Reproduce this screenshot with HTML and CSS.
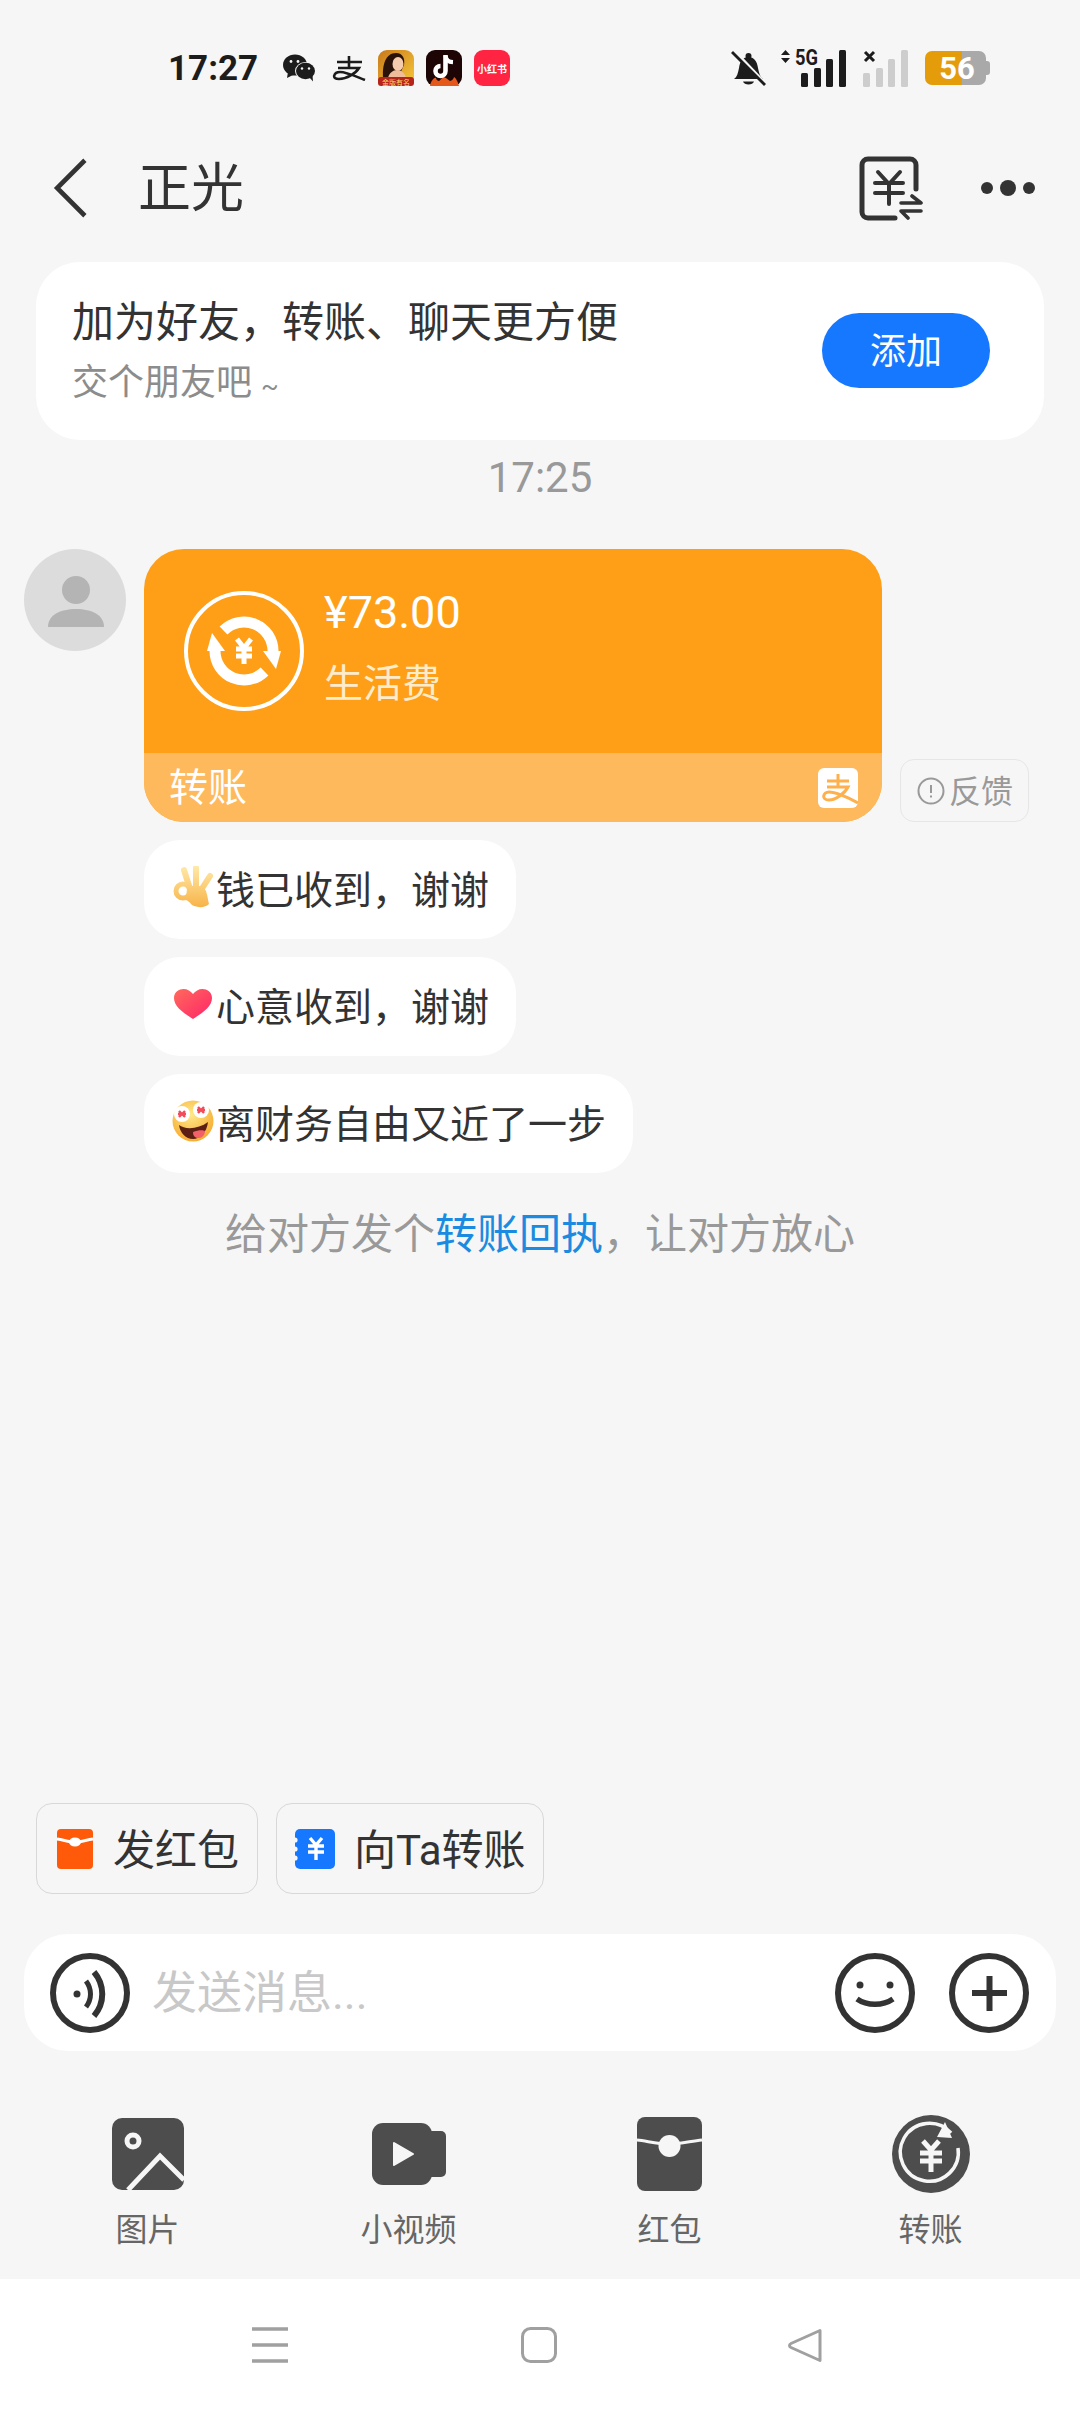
FILE: index.html
```html
<!DOCTYPE html>
<html lang="zh-CN">
<head>
  <meta charset="UTF-8" />
  <meta name="viewport" content="width=device-width, initial-scale=1.0"/>
  <title>正光</title>
  <link rel="stylesheet" href="styles.css">
</head>
<body>
  <div class="page">

    <!-- status bar -->
    <div class="status">
      <span class="clock">17:27</span>
      <div class="notif">
        <svg class="ic-wechat" viewBox="0 0 33 28">
          <ellipse cx="12" cy="11" rx="12" ry="10.5" fill="#1c1c1c"/>
          <path d="M5 18l-1 6 6-3z" fill="#1c1c1c"/>
          <ellipse cx="22.5" cy="17" rx="10.5" ry="9" fill="#f6f6f6"/>
          <ellipse cx="22.5" cy="17" rx="9.5" ry="8.3" fill="#1c1c1c"/>
          <path d="M26 23l4 4.500-.5-6z" fill="#1c1c1c"/>
          <circle cx="8" cy="7.500" r="1.400" fill="#f6f6f6"/>
          <circle cx="15" cy="7.500" r="1.400" fill="#f6f6f6"/>
          <circle cx="19" cy="14.500" r="1.200" fill="#f6f6f6"/>
          <circle cx="26" cy="14.500" r="1.200" fill="#f6f6f6"/>
        </svg>
        <svg class="ic-zhi" viewBox="0 0 34 26">
          <path d="M5 7h25M17 1v12M6 13h21C24 18 15 24 7 24c-8 0-5-7 1-7 7 0 17 5 25 8" fill="none" stroke="#1c1c1c" stroke-width="2.600"/>
        </svg>
        <svg class="ic-app" viewBox="0 0 36 36">
          <defs>
            <linearGradient id="gold" x1="0" y1="0" x2="1" y2="1">
              <stop offset="0" stop-color="#c9791a"/>
              <stop offset="1" stop-color="#f7c93a"/>
            </linearGradient>
          </defs>
          <rect width="36" height="36" rx="9" fill="url(#gold)"/>
          <path d="M5 28C4 14 8 3 18 3c7 0 9 6 8 12l-6 13z" fill="#2b1208"/>
          <ellipse cx="20" cy="14" rx="5.500" ry="7" fill="#f5cbae"/>
          <path d="M10 28c1-5 5-8 9-8s8 3 9 8z" fill="#f0bd9c"/>
          <rect y="27" width="36" height="9" rx="3" fill="#b5231a"/>
          <text class="ic-app-txt" x="18" y="34.500" text-anchor="middle">金版有名</text>
        </svg>
        <svg class="ic-app" viewBox="0 0 36 36">
          <rect width="36" height="36" rx="9" fill="#1d0505"/>
          <path d="M4 36c1-5 4-9 6-8 0 2 2 3 3 3 2-1 2-3 5-4 3 1 4 3 6 4 2 0 4-3 4-4 2 1 4 5 5 9z" fill="#e4581c"/>
          <path d="M19.500 5v16a5 5 0 1 1-5-5" fill="none" stroke="#fff" stroke-width="4.600"/>
          <path d="M19.500 6c.5 4 3.500 6 7.500 6.200" fill="none" stroke="#fff" stroke-width="4.200"/>
        </svg>
        <div class="ic-red">小红书</div>
      </div>
      <div class="sys">
        <svg class="ic-bell" viewBox="0 0 35 35">
          <path d="M3 28c3-2 4-6 5-11 1-7 4-11 9.500-11S26 10 27 17c1 5 2 9 5 11z" fill="#1c1c1c"/>
          <circle cx="17.500" cy="5" r="3" fill="#1c1c1c"/>
          <path d="M12 30.500h11c-1 4-10 4-11 0z" fill="#1c1c1c"/>
          <path d="M3 0l31 33" stroke="#f6f6f6" stroke-width="4"/>
          <path d="M1 1l33 33" stroke="#1c1c1c" stroke-width="2.800"/>
        </svg>
        <svg class="ic-signal" viewBox="0 -8 68 46">
          <path d="M1 6l4.500-5L10 6zM1 9h9l-4.500 5z" fill="#1c1c1c"/>
          <text class="sig-txt" x="15" y="16" textLength="23" lengthAdjust="spacingAndGlyphs">5G</text>
          <rect x="21" y="24" width="7" height="14" rx="1.500" fill="#1c1c1c"/>
          <rect x="34" y="19" width="7" height="19" rx="1.500" fill="#1c1c1c"/>
          <rect x="46" y="10" width="7" height="28" rx="1.500" fill="#1c1c1c"/>
          <rect x="59" y="1" width="7" height="37" rx="1.500" fill="#1c1c1c"/>
        </svg>
        <svg class="ic-signal2" viewBox="0 0 46 38">
          <path d="M2 3l9 9M11 3l-9 9" stroke="#1c1c1c" stroke-width="3"/>
          <rect x="0" y="24" width="7" height="14" rx="1.500" fill="#cdcdcd"/>
          <rect x="13" y="19" width="7" height="19" rx="1.500" fill="#cdcdcd"/>
          <rect x="25" y="10" width="7" height="28" rx="1.500" fill="#cdcdcd"/>
          <rect x="38" y="1" width="7" height="37" rx="1.500" fill="#cdcdcd"/>
        </svg>
        <div class="battery">
          <div class="battery-body"><span class="battery-num">56</span></div>
          <div class="battery-tip"></div>
        </div>
      </div>
    </div>

    <!-- header -->
    <div class="nav">
      <svg class="ic-back" viewBox="0 0 36 60">
        <path d="M32 3L5 30l27 27" fill="none" stroke="#333" stroke-width="4.500"/>
      </svg>
      <div class="nav-title">正光</div>
      <svg class="ic-bill" viewBox="0 0 64 65">
        <path d="M57 33V9a6 6 0 0 0-6-6H9a6 6 0 0 0-6 6v47a6 6 0 0 0 6 6h27" fill="none" stroke="#333" stroke-width="5" stroke-linecap="round"/>
        <path d="M19 16l11 12 11-12M16 27h28M16 37h28M30 27v21" fill="none" stroke="#333" stroke-width="4" stroke-linecap="round"/>
        <path d="M53 40l9 7H42M62 55H42l7 7" fill="none" stroke="#333" stroke-width="3.600" stroke-linecap="round" stroke-linejoin="round"/>
      </svg>
      <div class="dots"><i></i><i class="big"></i><i></i></div>
    </div>

    <!-- add friend -->
    <div class="add-card">
      <div class="add-text">
        <div class="add-title">加为好友，转账、聊天更方便</div>
        <div class="add-sub">交个朋友吧 <span class="tilde">~</span></div>
      </div>
      <div class="add-btn">添加</div>
    </div>

    <div class="time">17:25</div>

    <!-- message -->
    <div class="msg">
      <div class="avatar">
        <svg viewBox="0 0 102 102">
          <circle cx="52" cy="41" r="14" fill="#b4b4b4"/>
          <path d="M24 78c0-12 12-18 28-18s28 6 28 18z" fill="#b4b4b4"/>
        </svg>
      </div>
      <div class="msg-col">
        <div class="transfer-row">
          <div class="transfer">
            <div class="transfer-top">
              <svg class="ic-trans" viewBox="0 0 120 120">
                <circle cx="60" cy="60" r="58" fill="none" stroke="#fff" stroke-width="4"/>
                <path d="M39.500 39.500A29 29 0 0 1 89 60" fill="none" stroke="#fff" stroke-width="11"/>
                <path d="M79 60h18l-5 18z" fill="#fff"/>
                <g transform="rotate(180 60 60)">
                  <path d="M39.500 39.500A29 29 0 0 1 89 60" fill="none" stroke="#fff" stroke-width="11"/>
                  <path d="M79 60h18l-5 18z" fill="#fff"/>
                </g>
                <path d="M53 48l7 9 7-9M52 58h16M52 65h16M60 57v16" fill="none" stroke="#fff" stroke-width="5"/>
              </svg>
              <div class="transfer-text">
                <div class="amount">¥73.00</div>
                <div class="memo">生活费</div>
              </div>
            </div>
            <div class="transfer-foot">
              <span class="foot-label">转账</span>
              <svg class="ic-ali" viewBox="0 0 40 40">
                <rect width="40" height="40" rx="6" fill="#fff"/>
                <path d="M9 13h22M20 6v13M9 19h21C27 25 18 32 11 32 3 32 5 24 11 24c8 0 18 5 29 11" fill="none" stroke="#fdb04b" stroke-width="3"/>
              </svg>
            </div>
          </div>
          <div class="feedback">
            <svg class="ic-warn" viewBox="0 0 28 28">
              <circle cx="14" cy="14" r="12.500" fill="none" stroke="#999" stroke-width="2"/>
              <path d="M14 8v8M14 18.500v2" stroke="#999" stroke-width="2"/>
            </svg>
            <span class="feedback-label">反馈</span>
          </div>
        </div>

        <div class="bubble">
          <svg class="emoji" viewBox="0 0 42 42">
            <defs>
              <linearGradient id="skin" x1="0" y1="0" x2="0" y2="42" gradientUnits="userSpaceOnUse">
                <stop offset="0" stop-color="#ffe9a8"/>
                <stop offset="1" stop-color="#f8b247"/>
              </linearGradient>
              <linearGradient id="heart" x1="0" y1="0" x2="1" y2="1">
                <stop offset="0" stop-color="#ff6a5c"/>
                <stop offset="1" stop-color="#ff2469"/>
              </linearGradient>
              <radialGradient id="face" cx=".45" cy=".35" r=".7">
                <stop offset="0" stop-color="#ffe98a"/>
                <stop offset="1" stop-color="#f6a92c"/>
              </radialGradient>
            </defs>
            <path d="M18 23L12 4M24 22L24 2M29 24L38 10" fill="none" stroke="url(#skin)" stroke-width="6" stroke-linecap="round"/>
            <circle cx="11" cy="25" r="7" fill="none" stroke="url(#skin)" stroke-width="5"/>
            <path d="M15 22c6-4 16-3 19 3 2 6 2 10 3 13-4 4-11 4-17 1-2-2-3-4-6-5z" fill="url(#skin)"/>
          </svg>
          <span>钱已收到，谢谢</span>
        </div>
        <div class="bubble">
          <svg class="emoji" viewBox="0 0 42 42">
            <path d="M21 36C10 29 2 23 2 15 2 9 7 6 11.500 6c4 0 7 2 9.500 5 2.500-3 5.500-5 9.500-5C35 6 40 9 40 15c0 8-8 14-19 21z" fill="url(#heart)"/>
          </svg>
          <span>心意收到，谢谢</span>
        </div>
        <div class="bubble">
          <svg class="emoji" viewBox="0 0 42 42">
            <circle cx="21" cy="21" r="20.500" fill="url(#face)"/>
            <circle cx="10" cy="14" r="8" fill="#fff"/>
            <circle cx="29" cy="10" r="8" fill="#fff"/>
            <path d="M7 11l6 6M13 11l-6 6M6 14h8" stroke="#f44b5a" stroke-width="2.400"/>
            <path d="M26 7l6 6M32 7l-6 6M25 10h8" stroke="#f44b5a" stroke-width="2.400"/>
            <path d="M7 25c6 5 20 4 29-3-1 10-8 17-15 17S8 33 7 25z" fill="#5b1f14"/>
            <path d="M21 32c5-2 10-2 12-1 0 4-3 7-6 7-4 0-6-2-6-6z" fill="#f2606a"/>
          </svg>
          <span>离财务自由又近了一步</span>
        </div>
      </div>
    </div>

    <div class="hint">给对方发个<span class="hint-link">转账回执</span>，让对方放心</div>

    <div class="spacer"></div>

    <!-- quick actions -->
    <div class="chips">
      <div class="chip">
        <svg class="ic-chip-red" viewBox="0 0 36 40">
          <rect width="36" height="40" rx="4" fill="#ff5a0a"/>
          <path d="M0 10c7 1 12 3 18 3s11-2 18-3" fill="none" stroke="#fff" stroke-width="3"/>
          <ellipse cx="18" cy="13" rx="6" ry="4.500" fill="#fff"/>
        </svg>
        <span class="chip-label">发红包</span>
      </div>
      <div class="chip chip-blue">
        <svg class="ic-chip-blue" viewBox="0 0 42 40">
          <rect x="2" width="40" height="40" rx="5" fill="#1677ff"/>
          <circle cx="2" cy="11" r="2.600" fill="#f6f6f6"/>
          <circle cx="2" cy="20" r="2.600" fill="#f6f6f6"/>
          <circle cx="2" cy="29" r="2.600" fill="#f6f6f6"/>
          <path d="M17 9l6 7 6-7M15 17h16M15 23h16M23 16v15" fill="none" stroke="#fff" stroke-width="3.400"/>
        </svg>
        <span class="chip-label">向Ta转账</span>
      </div>
    </div>

    <!-- input -->
    <div class="input-bar">
      <svg class="ic-round" viewBox="0 0 80 80">
        <circle cx="40" cy="40" r="37" fill="none" stroke="#333" stroke-width="6"/>
        <circle cx="27" cy="41" r="3.500" fill="#333"/>
        <path d="M36 28c6 8 6 18 0 26" fill="none" stroke="#333" stroke-width="5"/>
        <path d="M44 19c11 13 11 31 0 44" fill="none" stroke="#333" stroke-width="6"/>
      </svg>
      <div class="input-ph">发送消息...</div>
      <svg class="ic-round" viewBox="0 0 80 80">
        <circle cx="40" cy="40" r="37" fill="none" stroke="#333" stroke-width="6"/>
        <circle cx="25" cy="32" r="3.500" fill="#333"/>
        <circle cx="55" cy="32" r="3.500" fill="#333"/>
        <path d="M22 46c10 7 26 7 36 0" fill="none" stroke="#333" stroke-width="5.500"/>
      </svg>
      <svg class="ic-round ic-plus" viewBox="0 0 80 80">
        <circle cx="40" cy="40" r="37" fill="none" stroke="#333" stroke-width="6"/>
        <path d="M23 40h35M40.500 23v35" stroke="#333" stroke-width="6"/>
      </svg>
    </div>

    <!-- tray -->
    <div class="tray">
      <div class="tray-item">
        <div class="tray-icon">
          <svg width="72" height="72" viewBox="0 0 72 72">
            <rect width="72" height="72" rx="10" fill="#4d4d4d"/>
            <circle cx="21" cy="23" r="6" fill="#4d4d4d" stroke="#f6f6f6" stroke-width="5"/>
            <path d="M16 72l32-34 24 24" fill="none" stroke="#f6f6f6" stroke-width="5"/>
          </svg>
        </div>
        <div class="tray-label">图片</div>
      </div>
      <div class="tray-item">
        <div class="tray-icon">
          <svg width="74" height="62" viewBox="0 0 74 62">
            <rect width="60" height="62" rx="11" fill="#4d4d4d"/>
            <rect x="50" y="8" width="24" height="46" rx="5" fill="#4d4d4d"/>
            <path d="M22 20l19 11-19 11z" fill="#f6f6f6" stroke="#f6f6f6" stroke-width="2" stroke-linejoin="round"/>
          </svg>
        </div>
        <div class="tray-label">小视频</div>
      </div>
      <div class="tray-item">
        <div class="tray-icon">
          <svg width="65" height="74" viewBox="0 0 65 74">
            <rect width="65" height="74" rx="8" fill="#4d4d4d"/>
            <path d="M0 23c10 1 20 4 32 4s22-3 33-4" fill="none" stroke="#f6f6f6" stroke-width="3"/>
            <circle cx="32.500" cy="29" r="11" fill="#f6f6f6"/>
          </svg>
        </div>
        <div class="tray-label">红包</div>
      </div>
      <div class="tray-item">
        <div class="tray-icon">
          <svg width="78" height="78" viewBox="0 0 78 78">
            <circle cx="39" cy="39" r="39" fill="#4d4d4d"/>
            <path d="M59 18A29 29 0 1 0 66 33" fill="none" stroke="#f6f6f6" stroke-width="3.500"/>
            <path d="M53 7l7 16-15-1z" fill="#f6f6f6"/>
            <path d="M31 26l8 9 8-9M28 38h22M28 46h22M39 35v22" fill="none" stroke="#f6f6f6" stroke-width="5"/>
          </svg>
        </div>
        <div class="tray-label">转账</div>
      </div>
    </div>

    <!-- system nav -->
    <div class="sysnav">
      <svg width="36" height="38" viewBox="0 0 36 38">
        <path d="M0 3h36M0 19h36M0 35h36" stroke="#a0a0a0" stroke-width="3.400"/>
      </svg>
      <svg width="36" height="36" viewBox="0 0 36 36">
        <rect x="1.500" y="1.500" width="33" height="33" rx="8" fill="none" stroke="#a0a0a0" stroke-width="3"/>
      </svg>
      <svg width="36" height="36" viewBox="0 0 36 36">
        <path d="M32 3.500L3 16.500c-2 1-2 3 0 4l29 13V3.500z" fill="none" stroke="#a0a0a0" stroke-width="3" stroke-linejoin="round"/>
      </svg>
    </div>
  </div>
</body>
</html>
```

FILE: styles.css
```css
* {
  box-sizing: border-box;
}

body {
  margin: 0;
  background: #f6f6f6;
  font-family: "Roboto", "Noto Sans CJK SC", sans-serif;
  color: #333;
}

svg {
  display: block;
  flex: none;
}

.page {
  width: 1080px;
  height: 2412px;
  display: flex;
  flex-direction: column;
  overflow: hidden;
}

/* status bar */
.status {
  height: 136px;
  flex: none;
  display: flex;
  align-items: center;
  padding-left: 168px;
  color: #1c1c1c;
}

.clock {
  font-family: "Roboto", sans-serif;
  font-size: 35px;
  font-weight: 700;
  width: 115px;
}

.notif {
  display: flex;
  align-items: center;
  gap: 12px;
}

.ic-wechat {
  width: 33px;
  height: 28px;
  margin-right: 4px;
}

.ic-zhi {
  width: 34px;
  height: 26px;
}

.ic-app {
  width: 36px;
  height: 36px;
}

.ic-app-txt {
  font-size: 7px;
  fill: #ffd76a;
  font-family: "Noto Sans CJK SC", sans-serif;
}

.ic-red {
  width: 36px;
  height: 36px;
  border-radius: 9px;
  background: #ff2442;
  color: #fff;
  font-size: 10px;
  font-weight: 700;
  font-family: "Noto Sans CJK SC", sans-serif;
  display: flex;
  align-items: center;
  justify-content: center;
}

.sys {
  margin-left: auto;
  margin-right: 90px;
  display: flex;
  align-items: center;
}

.ic-bell {
  width: 35px;
  height: 35px;
  margin-right: 14px;
}

.ic-signal {
  width: 68px;
  height: 46px;
  margin-top: -8px;
  margin-right: 15px;
}

.sig-txt {
  font-family: "Roboto", sans-serif;
  font-size: 22px;
  font-weight: 700;
  fill: #1c1c1c;
}

.ic-signal2 {
  width: 46px;
  height: 38px;
  margin-right: 16px;
}

.battery {
  display: flex;
  align-items: center;
}

.battery-body {
  width: 61px;
  height: 34px;
  padding-left: 3px;
  border-radius: 7px;
  background: linear-gradient(90deg, #e59c0b 0, #e59c0b 37px, #a9a9a9 37px);
  display: flex;
  align-items: center;
  justify-content: center;
}

.battery-num {
  color: #fff;
  font-family: "Roboto", sans-serif;
  font-weight: 700;
  font-size: 31px;
}

.battery-tip {
  width: 4px;
  height: 14px;
  background: #a9a9a9;
  border-radius: 0 3px 3px 0;
}

/* header */
.nav {
  height: 104px;
  flex: none;
  display: flex;
  align-items: center;
  padding-left: 52px;
}

.ic-back {
  width: 37px;
  height: 62px;
  margin-right: 49px;
}

.nav-title {
  font-size: 53px;
  color: #333;
  padding-bottom: 8px;
}

.ic-bill {
  width: 64px;
  height: 65px;
  margin-left: auto;
  margin-right: 58px;
}

.dots {
  display: flex;
  align-items: center;
  gap: 7px;
  margin-right: 45px;
}

.dots i {
  display: block;
  width: 12px;
  height: 12px;
  border-radius: 50%;
  background: #333;
}

.dots i.big {
  width: 16px;
  height: 16px;
}

/* add friend card */
.add-card {
  flex: none;
  height: 178px;
  margin: 22px 36px 0;
  padding: 0 54px 0 36px;
  background: #fff;
  border-radius: 44px;
  display: flex;
  align-items: center;
  justify-content: space-between;
}

.add-text {
  padding-top: 2px;
}

.add-title {
  font-size: 42px;
  line-height: 60px;
  color: #333;
}

.add-sub {
  font-size: 36px;
  line-height: 52px;
  margin-top: 4px;
  color: #8c8c8c;
}

.tilde {
  font-size: 26px;
}

.add-btn {
  width: 168px;
  height: 75px;
  margin-bottom: 2px;
  padding-bottom: 4px;
  border-radius: 38px;
  background: #1677ff;
  color: #fff;
  font-size: 36px;
  display: flex;
  align-items: center;
  justify-content: center;
}

.time {
  flex: none;
  height: 72px;
  padding-top: 3px;
  line-height: 69px;
  text-align: center;
  font-size: 42px;
  color: #999;
}

/* message */
.msg {
  flex: none;
  display: flex;
  margin-top: 37px;
  padding-left: 24px;
  gap: 18px;
}

.avatar {
  width: 102px;
  height: 102px;
  border-radius: 50%;
  background: #dcdcdc;
  flex: none;
}

.msg-col {
  display: flex;
  flex-direction: column;
  align-items: flex-start;
  gap: 18px;
}

.transfer-row {
  display: flex;
  align-items: flex-end;
  gap: 18px;
}

.transfer {
  width: 738px;
  height: 273px;
  border-radius: 40px;
  overflow: hidden;
  background: #ff9f18;
  display: flex;
  flex-direction: column;
}

.transfer-top {
  height: 204px;
  display: flex;
  align-items: center;
  padding-left: 40px;
  gap: 20px;
  color: #fff;
}

.ic-trans {
  width: 120px;
  height: 120px;
}

.transfer-text {
  padding-bottom: 8px;
}

.amount {
  font-size: 45px;
  line-height: 60px;
  color: #fff;
}

.memo {
  font-size: 39px;
  line-height: 56px;
  margin-top: 13px;
  color: #ffeccb;
}

.transfer-foot {
  flex: 1;
  background: #ffb95d;
  color: #fff;
  font-size: 39px;
  display: flex;
  align-items: center;
  justify-content: space-between;
  padding: 0 24px 0 25px;
}

.foot-label {
  padding-bottom: 7px;
}

.ic-ali {
  width: 40px;
  height: 40px;
}

.feedback {
  width: 129px;
  height: 63px;
  border: 1px solid #e6e6e6;
  border-radius: 14px;
  color: #999;
  font-size: 32px;
  display: flex;
  align-items: center;
  padding-left: 16px;
  gap: 4px;
}

.feedback-label {
  padding-bottom: 3px;
}

.ic-warn {
  width: 28px;
  height: 28px;
}

.bubble {
  height: 99px;
  padding: 0 27px 5px 28px;
  background: #fff;
  border-radius: 36px;
  font-size: 39px;
  color: #333;
  display: flex;
  align-items: center;
  gap: 2px;
}

.emoji {
  width: 42px;
  height: 42px;
}

.hint {
  flex: none;
  height: 122px;
  padding-top: 2px;
  line-height: 120px;
  text-align: center;
  font-size: 42px;
  color: #999;
}

.hint-link {
  color: #1a8be0;
}

.spacer {
  flex: 1;
}

/* quick actions */
.chips {
  flex: none;
  display: flex;
  gap: 18px;
  padding-left: 36px;
}

.chip {
  height: 91px;
  width: 222px;
  border: 1.500px solid #d8d8d8;
  border-radius: 16px;
  font-size: 42px;
  color: #333;
  display: flex;
  align-items: center;
  padding-left: 20px;
  gap: 20px;
}

.chip-blue {
  width: 268px;
  padding-left: 16px;
  gap: 19px;
}

.chip-label {
  padding-bottom: 5px;
}

.ic-chip-red {
  width: 36px;
  height: 40px;
}

.ic-chip-blue {
  width: 42px;
  height: 40px;
}

/* input */
.input-bar {
  flex: none;
  height: 117px;
  margin: 40px 24px 0;
  padding: 0 27px 0 26px;
  background: #fff;
  border-radius: 44px;
  display: flex;
  align-items: center;
}

.ic-round {
  width: 80px;
  height: 80px;
}

.ic-plus {
  margin-left: 34px;
}

.input-ph {
  flex: 1;
  padding: 0 0 7px 22px;
  font-size: 45px;
  color: #c8c8c8;
}

/* tray */
.tray {
  flex: none;
  height: 228px;
  padding: 64px 19px 0 17px;
  display: grid;
  grid-template-columns: repeat(4, 1fr);
}

.tray-item {
  display: flex;
  flex-direction: column;
  align-items: center;
}

.tray-icon {
  height: 78px;
  display: flex;
  align-items: center;
  justify-content: center;
}

.tray-label {
  margin-top: 15px;
  font-size: 32px;
  line-height: 44px;
  color: #666;
}

/* system nav */
.sysnav {
  flex: none;
  height: 133px;
  background: #fff;
  display: grid;
  grid-template-columns: 270px 268px 265px;
  justify-content: start;
  justify-items: center;
  align-items: center;
  padding: 0 0 2px 135px;
}
```
